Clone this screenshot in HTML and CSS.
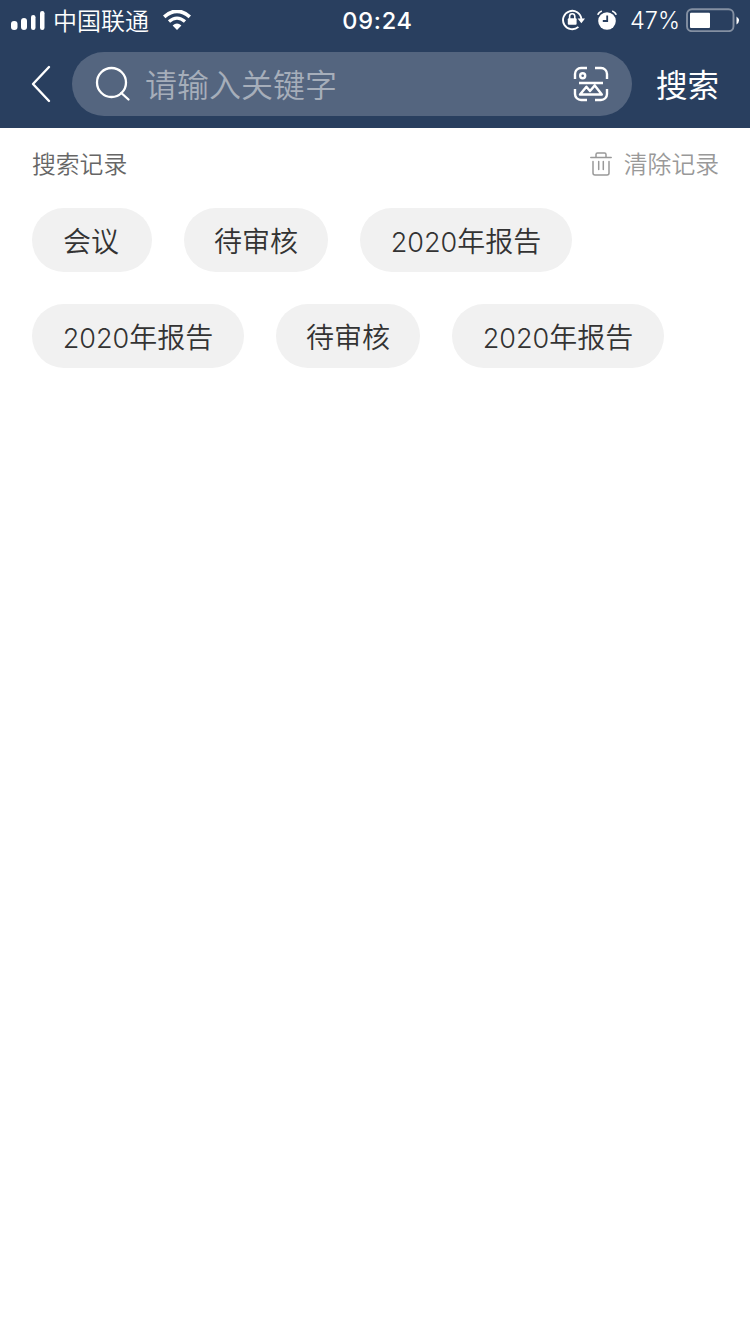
FILE: index.html
```html
<!DOCTYPE html>
<html lang="zh-CN">
<head>
<meta charset="utf-8">
<title>搜索</title>
<link rel="stylesheet" href="styles.css">
</head>
<body>
<header class="header">
  <div class="status">
    <div class="status-left">
      <svg class="signal" width="34" height="20" viewBox="0 0 34 20" fill="#fff"><rect x="0" y="11" width="6.5" height="9" rx="3"/><rect x="10" y="8" width="6" height="12" rx="3"/><rect x="20" y="5" width="4.5" height="15" rx="2.2"/><rect x="29" y="1" width="4.5" height="19" rx="2.2"/></svg>
      <span class="carrier">中国联通</span>
      <svg class="wifi" width="28" height="20" viewBox="0 0 28 20" fill="none" stroke="#fff"><path d="M1.2 6.8Q14-4.3 26.8 6.8" stroke-width="3.7"/><path d="M6 11.6Q14 4.6 22 11.6" stroke-width="3.3"/><path d="M9.6 15.4Q14 11.6 18.4 15.4L14 20Z" fill="#fff" stroke="none"/></svg>
    </div>
    <span class="time">09:24</span>
    <div class="status-right">
      <svg class="lock" width="24" height="22" viewBox="0 0 24 22" fill="none" stroke="#fff" stroke-width="1.9"><path d="M17.4 17.9A9.2 9.2 0 1 1 20.4 10"/><path d="M16.6 9.5H24L20.4 14.2Z" fill="#fff" stroke="none"/><rect x="6.8" y="9.3" width="8.8" height="6.4" rx="1" fill="#fff" stroke="none"/><path d="M8.6 10V7.4a2.6 2.6 0 0 1 5.2 0V10" stroke-width="1.6"/></svg>
      <svg class="alarm" width="20" height="20" viewBox="0 0 20 20" fill="none"><circle cx="10" cy="11" r="8.8" fill="#fff"/><path d="M.8 4.8Q1.8 2.1 4.8 1M19.2 4.8Q18.2 2.1 15.2 1" stroke="#fff" stroke-width="1.8"/><path d="M10.2 5.5V11H5.8" stroke="#293f5f" stroke-width="1.8"/></svg>
      <span class="percent">47%</span>
      <svg class="battery" width="54" height="24" viewBox="0 0 54 24"><rect x="1" y="1.2" width="46.5" height="22" rx="5" fill="none" stroke="#8490a2" stroke-width="1.9"/><rect x="4" y="4.8" width="20" height="15.2" rx="1" fill="#fff"/><path d="M50.5 8.5Q55.5 12.5 50.5 16.5Z" fill="#fff"/></svg>
    </div>
  </div>
  <div class="search-bar">
    <svg class="back" width="20" height="38" viewBox="0 0 20 38" fill="none" stroke="#fff" stroke-width="2.4" stroke-linecap="round" stroke-linejoin="round"><path d="M18 2L2 19L18 36"/></svg>
    <div class="field">
      <svg class="magnifier" width="36" height="36" viewBox="0 0 36 36" fill="none" stroke="#fff" stroke-width="2.3" stroke-linecap="round"><circle cx="16.5" cy="16.5" r="14.5"/><path d="M26.3 27L33.5 33.5"/></svg>
      <span class="placeholder">请输入关键字</span>
      <svg class="scan" width="36" height="36" viewBox="0 0 36 36" fill="none" stroke="#fff" stroke-width="2.4" stroke-linecap="butt" stroke-linejoin="round"><path d="M2 13V8a6 6 0 0 1 6-6h6M22 2h6a6 6 0 0 1 6 6v5M34 23v5a6 6 0 0 1-6 6h-6M14 34H8a6 6 0 0 1-6-6v-5"/><circle cx="9.7" cy="9.7" r="2.5"/><path d="M6 17H30M7 28.5L13.4 20.7L17 25L21.8 19.4L28.8 28.5Z"/></svg>
    </div>
    <span class="submit">搜索</span>
  </div>
</header>
<main class="history">
  <div class="history-head">
    <span class="history-title">搜索记录</span>
    <div class="clear">
      <svg width="22" height="24" viewBox="0 0 22 24" fill="none" stroke="#999" stroke-width="1.5" stroke-linecap="round" stroke-linejoin="round"><path d="M.8 5.5H21.2M6 5V2.5Q6 1 7.5 1h7Q16 1 16 2.5V5M3 9.5V21q0 2 2 2h12q2 0 2-2V9.5M8.7 9.5v8M13.3 9.5v8"/></svg>
      <span class="clear-label">清除记录</span>
    </div>
  </div>
  <div class="tags">
    <span class="tag short">会议</span>
    <span class="tag">待审核</span>
    <span class="tag wide"><span class="year">2020</span>年报告</span>
    <span class="tag wide"><span class="year">2020</span>年报告</span>
    <span class="tag">待审核</span>
    <span class="tag wide"><span class="year">2020</span>年报告</span>
  </div>
</main>
</body>
</html>
```
FILE: styles.css
```css
* { box-sizing: border-box; }
body {
  margin: 0;
  min-height: 1334px;
  background: #fff;
  font-family: "Noto Sans CJK SC", sans-serif;
  font-weight: 350;
  white-space: nowrap;
}
svg { display: block; flex: none; }
.header { height: 128px; background: #293f5f; color: #fff; }
.status {
  display: grid;
  grid-template-columns: 1fr auto 1fr;
  align-items: center;
  height: 40px;
  padding: 0 10px 0 11px;
}
.status-left, .status-right { display: flex; align-items: center; height: 40px; }
.status-right { justify-content: flex-end; }
.carrier { margin-left: 8px; font-size: 24px; line-height: 40px; }
.wifi { margin-left: 14px; }
.time {
  padding: 2px 0 0 4px;
  font-family: Inter, sans-serif;
  font-size: 23.5px;
  font-weight: 500;
  letter-spacing: 0.8px;
  line-height: 38px;
}
.alarm { margin-left: 12px; }
.percent { margin-left: 13px; padding-top: 2px; font-family: Inter, sans-serif; font-size: 23.5px; font-weight: 300; line-height: 38px; }
.battery { margin-left: 6px; }
.search-bar { display: flex; align-items: center; height: 88px; padding: 0 31px; }
.field {
  display: flex;
  flex: none;
  align-items: center;
  width: 560px;
  height: 64px;
  margin-left: 21px;
  padding: 0 23px;
  border-radius: 32px;
  background: #54657f;
}
.placeholder { flex: 1; margin-left: 14px; color: #a6aeba; font-size: 32px; line-height: 62px; padding-bottom: 2px; }
.submit { margin-left: 24px; padding-bottom: 2px; font-size: 31.5px; font-weight: 400; line-height: 62px; }
.history { padding: 0 31px 0 32px; }
.history-head { display: flex; justify-content: space-between; align-items: center; height: 72px; margin-bottom: 8px; font-size: 23.8px; }
.history-title { padding-bottom: 3px; color: #666; }
.clear { display: flex; align-items: center; gap: 12px; color: #999; }
.clear-label { padding-bottom: 3px; }
.tags { display: flex; flex-wrap: wrap; gap: 32px; }
.tag {
  height: 64px;
  padding: 0 30px;
  border-radius: 32px;
  background: #f1f1f1;
  color: #333;
  font-size: 28px;
  line-height: 64px;
  text-align: center;
}
.short { padding: 0 33px 0 31px; }
.wide { width: 212px; }
.year { font-family: Inter, sans-serif; font-size: 27px; font-weight: 300; }
```
